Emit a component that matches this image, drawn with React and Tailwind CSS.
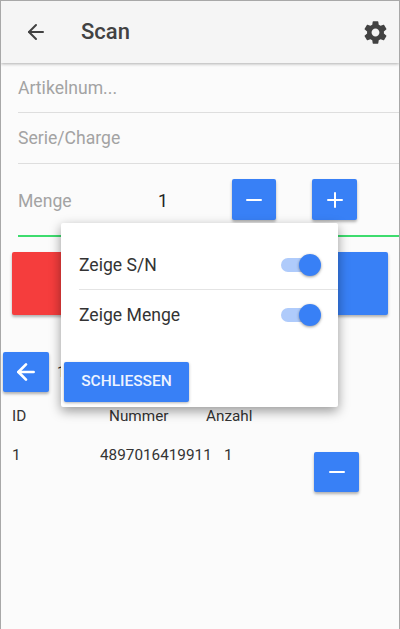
import React from 'react';
import { ArrowLeft, Minus, Plus } from 'lucide-react';

function SquareButton({ className, children }) {
  return (
    <button className={`flex items-center justify-center rounded-[2px] bg-[#3880f6] text-white shadow-[0_2px_3px_rgba(0,0,0,0.3)] ${className}`}>
      {children}
    </button>
  );
}

function Toggle() {
  return (
    <div className="relative h-[14px] w-[34px] rounded-full bg-[#afcbfb]">
      <div className="absolute right-[-6px] top-[-4px] h-[22px] w-[22px] rounded-full bg-[#3880f6] shadow-[0_1px_3px_rgba(0,0,0,0.4)]" />
    </div>
  );
}

function Gear() {
  return (
    <svg width="27" height="27" viewBox="0 0 24 24" fill="#424242">
      <path d="M19.43 12.98c.04-.32.07-.64.07-.98s-.03-.66-.07-.98l2.11-1.65c.19-.15.24-.42.12-.64l-2-3.46c-.12-.22-.39-.3-.61-.22l-2.49 1c-.52-.4-1.08-.73-1.69-.98l-.38-2.65C14.46 2.18 14.25 2 14 2h-4c-.25 0-.46.18-.49.42l-.38 2.65c-.61.25-1.17.59-1.69.98l-2.49-1c-.23-.09-.49 0-.61.22l-2 3.46c-.13.22-.07.49.12.64l2.11 1.65c-.04.32-.07.65-.07.98s.03.66.07.98l-2.11 1.65c-.19.15-.24.42-.12.64l2 3.46c.12.22.39.3.61.22l2.49-1c.52.4 1.08.73 1.69.98l.38 2.65c.03.24.24.42.49.42h4c.25 0 .46-.18.49-.42l.38-2.65c.61-.25 1.17-.59 1.69-.98l2.49 1c.23.09.49 0 .61-.22l2-3.46c.12-.22.07-.49-.12-.64l-2.11-1.65zM12 15.5c-1.93 0-3.5-1.57-3.5-3.5s1.57-3.5 3.5-3.5 3.5 1.57 3.5 3.5-1.57 3.5-3.5 3.5z" />
    </svg>
  );
}

export default function App() {
  return (
    <div className="relative h-[629px] w-[400px] overflow-hidden border border-b-0 border-[#a8a8a8] bg-[#fbfbfb] font-['Roboto',sans-serif] text-[#333]">
      {/* Header */}
      <div className="flex h-[62px] items-center bg-[#f5f5f5] pl-[23px] pr-[10px] shadow-[0_1px_3px_rgba(0,0,0,0.3)]">
        <ArrowLeft size={24} strokeWidth={2} className="text-[#424242]" />
        <span className="ml-[33px] pb-[1px] text-[22px] font-medium text-[#424242]">Scan</span>
        <span className="ml-auto"><Gear /></span>
      </div>

      {/* Inputs */}
      <div className="ml-[17px] flex h-[50px] items-center border-b border-[#dedede] pt-[1px] text-[17.6px] text-[#a3a3a3]">Artikelnum...</div>
      <div className="ml-[17px] flex h-[51px] items-center border-b border-[#dedede] text-[17.6px] text-[#a3a3a3]">Serie/Charge</div>

      {/* Menge */}
      <div className="ml-[17px] flex h-[73px] items-center border-b-2 border-[#3ddc6e]">
        <span className="w-[140px] pt-[3px] text-[17.6px] text-[#a3a3a3]">Menge</span>
        <span className="w-[74px] pt-[3px] text-[17.6px] text-[#222]">1</span>
        <SquareButton className="h-[41px] w-[44px]"><Minus size={24} strokeWidth={2} /></SquareButton>
        <SquareButton className="ml-[36px] h-[41px] w-[45px]"><Plus size={24} strokeWidth={2} /></SquareButton>
      </div>

      {/* Action buttons */}
      <div className="ml-[11px] mt-[15px] flex h-[63px] w-[376px] gap-[16px]">
        <div className="flex-1 rounded-[2px] bg-[#f53d3d] shadow-[0_2px_3px_rgba(0,0,0,0.3)]" />
        <div className="flex-1 rounded-[2px] bg-[#3880f6] shadow-[0_2px_3px_rgba(0,0,0,0.3)]" />
      </div>

      {/* Back + page */}
      <div className="ml-[2px] mt-[37px] flex items-center">
        <SquareButton className="h-[40px] w-[46px]"><ArrowLeft size={26} strokeWidth={2.5} /></SquareButton>
        <span className="ml-[8px] text-[15.3px]">1</span>
      </div>

      {/* Table */}
      <div className="ml-[11px] mt-[14px] grid grid-cols-[88px_106px_1fr] text-[15.3px] leading-[20px]">
        <span>ID</span>
        <span className="pl-[9px]">Nummer</span>
        <span>Anzahl</span>
      </div>
      <div className="relative ml-[11px] mt-[19px] grid grid-cols-[88px_124px_1fr] text-[15.3px] leading-[20px]">
        <span>1</span>
        <span>4897016419911</span>
        <span>1</span>
        <SquareButton className="absolute left-[302px] top-[7px] h-[40px] w-[45px]"><Minus size={24} strokeWidth={2} /></SquareButton>
      </div>

      {/* Popup */}
      <div className="absolute left-[60px] top-[222px] h-[184px] w-[277px] rounded-[2px] bg-white shadow-[0_4px_12px_rgba(0,0,0,0.4)]">
        <div className="ml-[18px] flex h-[67px] items-center justify-between border-b border-[#e4e4e4] pr-[23px] pt-[18px] text-[17.6px]">
          <span>Zeige S/N</span>
          <Toggle />
        </div>
        <div className="ml-[18px] flex h-[50px] items-center justify-between pr-[23px] text-[17.6px]">
          <span>Zeige Menge</span>
          <Toggle />
        </div>
        <button className="absolute left-[3px] top-[139px] h-[40px] w-[125px] rounded-[2px] bg-[#3880f6] text-[15.5px] font-medium text-[#eef4ff] shadow-[0_1px_3px_rgba(0,0,0,0.3)]">
          SCHLIESSEN
        </button>
      </div>
    </div>
  );
}
